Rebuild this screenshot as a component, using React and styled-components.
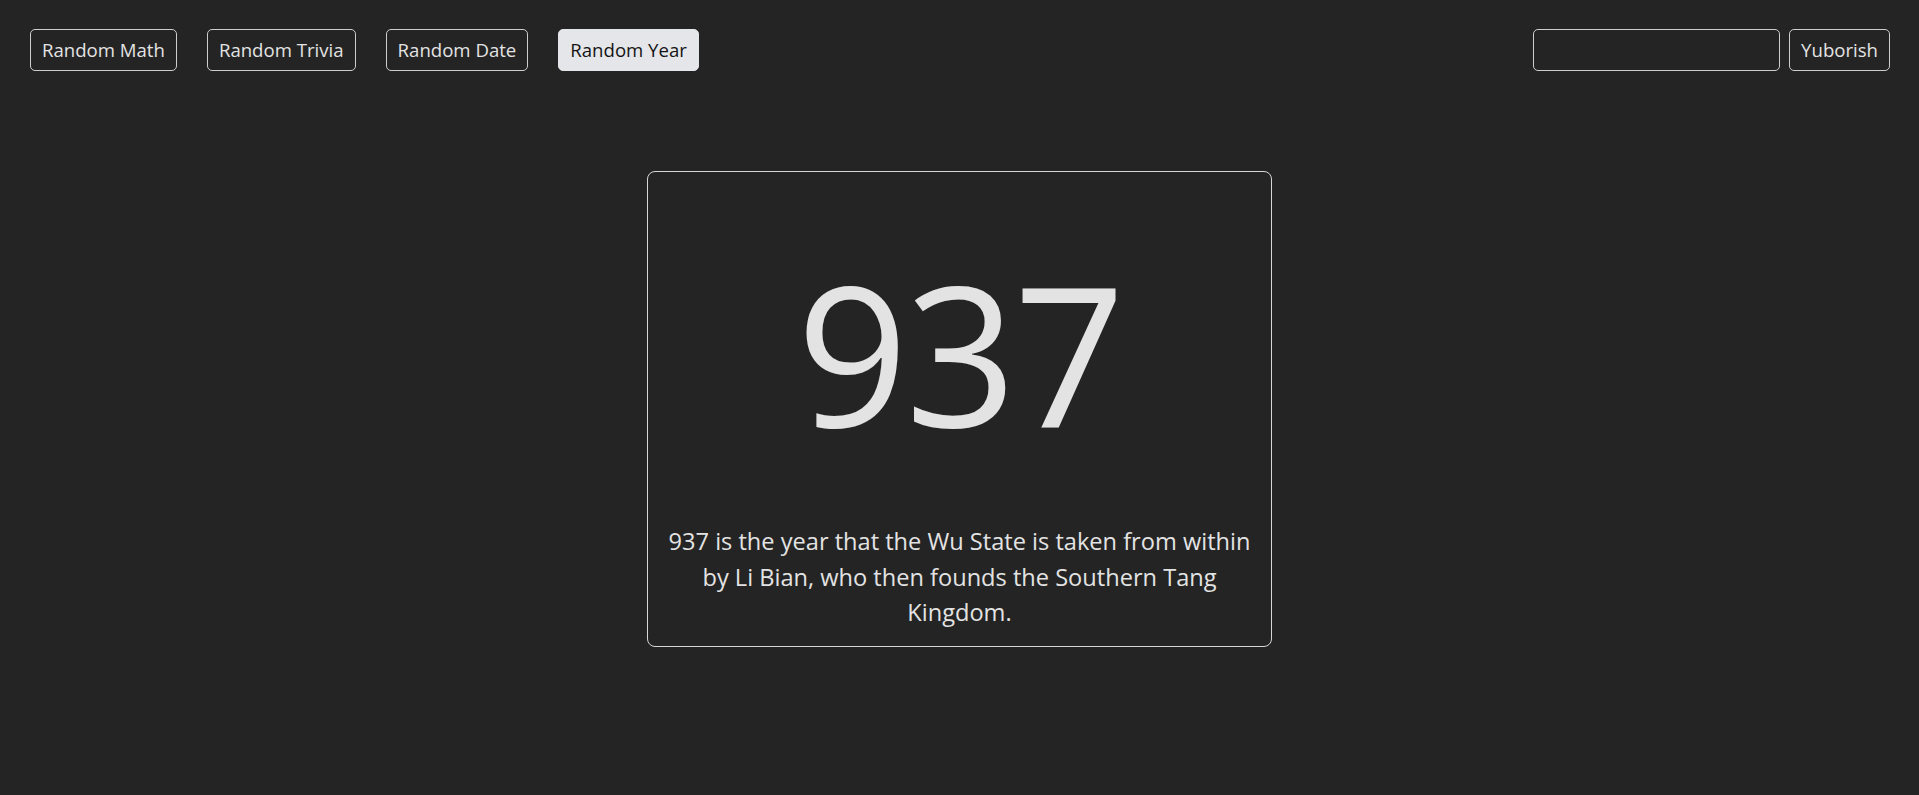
import React, { useState } from 'react'
import styled, { createGlobalStyle } from 'styled-components'

const GlobalStyle = createGlobalStyle`
    html, body {
        margin: 0;
        padding: 0;
        background-color: #242424;
        color: #e3e3e3;
        font-family: "Open Sans", "Noto Sans", sans-serif;
    }
`

const Page = styled.div`
    min-height: 795px;
    background-color: #242424;
`

const Toolbar = styled.div`
    display: flex;
    justify-content: space-between;
    align-items: center;
    padding: 29px 29px 0 30px;
`

const Group = styled.div`
    display: flex;
    align-items: center;
    gap: ${props => props.gap || 30}px;
`

const Button = styled.button`
    display: block;
    height: 42px;
    padding: 0 11px;
    font: inherit;
    font-size: 18.6px;
    line-height: 1;
    color: ${props => props.active ? '#141414' : '#e3e3e3'};
    background-color: ${props => props.active ? '#e4e6ea' : 'transparent'};
    border: 1px solid ${props => props.active ? '#e4e6ea' : '#cdcdcd'};
    border-radius: 5px;
    cursor: pointer;
    outline: none;
    white-space: nowrap;
`

const Input = styled.input`
    display: block;
    box-sizing: border-box;
    width: 247px;
    height: 42px;
    padding: 0 10px;
    font: inherit;
    font-size: 18.6px;
    color: #e3e3e3;
    background: transparent;
    border: 1px solid #cdcdcd;
    border-radius: 5px;
    outline: none;
`

const Main = styled.div`
    display: flex;
    justify-content: center;
    padding-top: 100px;
`

const Card = styled.div`
    box-sizing: border-box;
    width: 625px;
    height: 476px;
    display: flex;
    flex-direction: column;
    align-items: center;
    padding: 0 14px;
    border: 1px solid #d6d6d6;
    border-radius: 8px;
`

const Number = styled.div`
    margin-top: 82px;
    font-size: 195px;
    line-height: 1;
    letter-spacing: -3px;
    color: #e3e3e3;
`

const Fact = styled.p`
    margin: 75px 0 0;
    font-size: 23.6px;
    line-height: 35.5px;
    text-align: center;
    color: #e3e3e3;
`

const tabs = ['Random Math', 'Random Trivia', 'Random Date', 'Random Year']

const App = () => {
    const [active, setActive] = useState('Random Year')
    const [value, setValue] = useState('')

    return (
        <Page>
            <GlobalStyle />
            <Toolbar>
                <Group>
                    {tabs.map(t => (
                        <Button key={t} active={t === active} onClick={() => setActive(t)}>{t}</Button>
                    ))}
                </Group>
                <Group gap={9}>
                    <Input value={value} onChange={e => setValue(e.target.value)} />
                    <Button>Yuborish</Button>
                </Group>
            </Toolbar>
            <Main>
                <Card>
                    <Number>937</Number>
                    <Fact>937 is the year that the Wu State is taken from within by Li Bian, who then founds the Southern Tang Kingdom.</Fact>
                </Card>
            </Main>
        </Page>
    )
}

export default App
